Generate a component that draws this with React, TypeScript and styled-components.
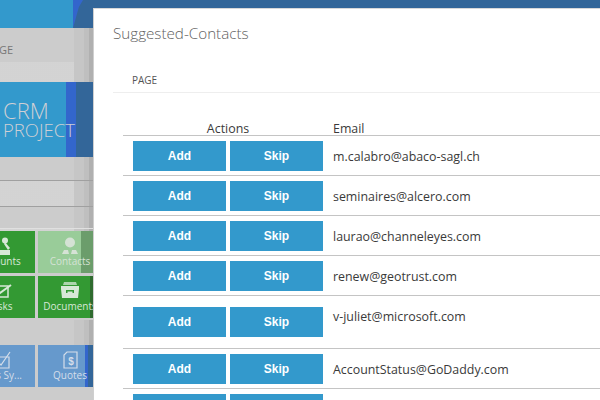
import React from 'react';
import styled, { createGlobalStyle } from 'styled-components';

const GlobalStyle = createGlobalStyle`
  html, body {
    margin: 0;
    padding: 0;
    background: #ffffff;
  }
`;

const Page = styled.div`
  display: flex;
  width: 600px;
  height: 400px;
  overflow: hidden;
  background: #336699;
  font-family: 'Open Sans', sans-serif;
`;

// dimmed app behind the dialog
const Backdrop = styled.div`
  flex: 0 0 93px;
  display: flex;
  flex-direction: column;
  overflow: hidden;
`;

const TopBar = styled.div`
  flex: 0 0 28px;
  display: flex;
  background: #336699;
`;

const TopBlue = styled.div`
  width: 83px;
  background: linear-gradient(to right, #3399cc 73px, #3366cc 73px);
  clip-path: polygon(0 0, 100% 0, 95% 25%, 88% 100%, 0 100%);
`;

const steps = 'linear-gradient(to right, transparent 74px, #c6c6c6 74px 84px, #bfbfbf 84px 89px, #b0b0b0 89px)';

const Band = styled.div<{ $h: number; $dotted?: boolean; $line?: string }>`
  flex: 0 0 ${p => p.$h}px;
  box-sizing: border-box;
  display: flex;
  align-items: center;
  background-color: #cccccc;
  background-image: ${p =>
    p.$dotted ? `${steps}, radial-gradient(#dadada 0.6px, transparent 0.8px)` : steps};
  background-size: 100% 100%, 2px 2px;
  border-top: ${p => (p.$line ? `1px solid ${p.$line}` : '0')};
`;

const CropText = styled.span`
  font-size: 11px;
  color: #777777;
  margin: 8px 0 0 -1px;
`;

const Brand = styled.div`
  flex: 0 0 75px;
  display: flex;
  background: #336699;
`;

const BrandBlue = styled.div`
  box-sizing: content-box;
  width: 63px;
  background: #3399cc;
  border-right: 10px solid #3366cc;
  padding: 16px 0 0 3px;
  color: #cfcfd4;
  font-weight: 300;
  white-space: nowrap;
`;

const BrandBig = styled.div`
  font-size: 22px;
  line-height: 24px;
`;

const BrandSmall = styled.div`
  font-size: 18.5px;
  line-height: 16px;
`;

const TileRow = styled.div<{ $h: number }>`
  flex: 0 0 ${p => p.$h}px;
  display: flex;
  gap: 3px;
  background: #cccccc;
`;

// tile whose left half runs off the window
const CutTile = styled.div<{ $bg: string; $fg: string }>`
  flex: 0 0 71px;
  margin-left: -36px;
  height: 42px;
  background: ${p => p.$bg};
  color: ${p => p.$fg};
  display: flex;
  flex-direction: column;
  align-items: center;
  font-size: 10px;
  line-height: 12px;
  white-space: nowrap;
  svg {
    margin-top: 6px;
    flex: 0 0 18px;
  }
`;

const Tile = styled.div<{ $bg: string; $fg: string }>`
  flex: 0 0 55px;
  box-sizing: border-box;
  height: 42px;
  padding-left: 9px;
  background: ${p => p.$bg};
  color: ${p => p.$fg};
  display: flex;
  flex-direction: column;
  align-items: center;
  font-size: 10px;
  line-height: 12px;
  white-space: nowrap;
  overflow: hidden;
  svg {
    margin-top: 6px;
    flex: 0 0 18px;
  }
`;

const Dialog = styled.div`
  flex: 1;
  margin-top: 8px;
  background: #ffffff;
  border-left: 1px solid #cfcfcf;
  border-top: 1px solid #d8d8d8;
  display: flex;
  flex-direction: column;
  overflow: hidden;
  min-width: 0;
`;

const Title = styled.h1`
  margin: 13px 0 0 19px;
  font-size: 15.2px;
  line-height: 22px;
  font-weight: 300;
  color: #5f5f5f;
`;

const Breadcrumb = styled.div`
  margin: 29px 0 0 19px;
  padding: 0 0 5px 19px;
  border-bottom: 1px solid #eeeeee;
  font-size: 10px;
  line-height: 14px;
  color: #555555;
`;

const Table = styled.div`
  margin: 22px 0 0 29px;
  display: flex;
  flex-direction: column;
`;

const HeadRow = styled.div`
  display: flex;
  height: 14px;
  padding-top: 6px;
  border-bottom: 1px solid #c4c4c4;
  font-size: 12.4px;
  line-height: 16px;
  color: #3a3a3a;
`;

const ActionsHead = styled.div`
  flex: 0 0 200px;
  margin-right: 10px;
  padding-left: 10px;
  box-sizing: border-box;
  text-align: center;
`;

const Row = styled.div<{ $h: number }>`
  display: flex;
  flex: 0 0 ${p => p.$h}px;
  box-sizing: border-box;
  align-items: center;
  padding-left: 10px;
  border-bottom: 1px solid #c4c4c4;
`;

const Actions = styled.div`
  flex: 0 0 190px;
  display: flex;
  gap: 4px;
`;

const ActionButton = styled.button`
  width: 93px;
  height: 30px;
  border: 0;
  padding: 0;
  background: #3399cc;
  color: #ffffff;
  font-family: 'Liberation Sans', sans-serif;
  font-size: 12px;
  font-weight: 700;
`;

const Email = styled.div`
  align-self: flex-start;
  margin: 13px 0 0 10px;
  font-size: 12.4px;
  line-height: 16px;
  color: #3a3a3a;
  white-space: nowrap;
`;

const AccountsIcon = ({ color }: { color: string }) => (
  <svg width="22" height="18" viewBox="0 0 22 18" fill={color}>
    <circle cx="16" cy="3.500" r="3" />
    <path d="M16 5l5 6-2 2-4-6z" />
    <path d="M0 12l5 1h16v5H0z" />
  </svg>
);

const ContactIcon = ({ color }: { color: string }) => (
  <svg width="20" height="18" viewBox="0 0 20 18" fill={color}>
    <circle cx="10" cy="5.500" r="5" />
    <path d="M2 17l2-4h4l1 4zM11 17l1-4h4l2 4z" />
  </svg>
);

const TasksIcon = ({ color }: { color: string }) => (
  <svg width="24" height="18" viewBox="0 0 24 18" fill="none" stroke={color} strokeWidth="1.500">
    <path d="M6 4h14v11H6z" />
    <path d="M9 8l3 3 11-8" strokeWidth="2" />
  </svg>
);

const DocumentsIcon = ({ color }: { color: string }) => (
  <svg width="18" height="18" viewBox="0 0 18 18" fill={color}>
    <path d="M3 0h12l1 3H2z" opacity="0.75" />
    <path d="M0 4h18v3l-1 9H1L0 7zM5 8v3h1.500V9.500h5V11H13V8z" fillRule="evenodd" />
  </svg>
);

const SalesIcon = ({ color }: { color: string }) => (
  <svg width="22" height="18" viewBox="0 0 22 18" fill="none" stroke={color} strokeWidth="1.200">
    <path d="M6 6h14v11H6z" />
    <path d="M9 11l3 3 9-13" />
  </svg>
);

const QuotesIcon = ({ color }: { color: string }) => (
  <svg width="16" height="18" viewBox="0 0 16 18" fill="none" stroke={color} strokeWidth="1.200">
    <path d="M5 1h10v16H2V4z" />
    <text x="9" y="14" fontSize="10" fontWeight="700" fill={color} stroke="none" textAnchor="middle" fontFamily="'Liberation Sans', sans-serif">$</text>
  </svg>
);

const contacts = [
  { email: 'm.calabro@abaco-sagl.ch', h: 40 },
  { email: 'seminaires@alcero.com', h: 40 },
  { email: 'laurao@channeleyes.com', h: 40 },
  { email: 'renew@geotrust.com', h: 40 },
  { email: 'v-juliet@microsoft.com', h: 53 },
  { email: 'AccountStatus@GoDaddy.com', h: 40 },
  { email: '', h: 40 },
];

const green = '#339933';
const blue = '#6699cc';
const greenText = '#d7e8d7';
const blueText = '#d5deea';

const App: React.FC = () => {
  return (
    <>
      <GlobalStyle />
      <Page>
        <Backdrop>
          <TopBar>
            <TopBlue />
          </TopBar>
          <Band $h={34}>
            <CropText>GE</CropText>
          </Band>
          <Band $h={20} $dotted />
          <Brand>
            <BrandBlue>
              <BrandBig>CRM</BrandBig>
              <BrandSmall>PROJECT</BrandSmall>
            </BrandBlue>
          </Brand>
          <Band $h={23} />
          <Band $h={26} $dotted $line="#a0a0a0" />
          <Band $h={22} $line="#a0a0a0" />
          <Band $h={3} $dotted $line="#e0e0e0" />
          <TileRow $h={45}>
            <CutTile $bg={green} $fg={greenText}>
              <AccountsIcon color={greenText} />
              <span>Accounts</span>
            </CutTile>
            <Tile $bg="linear-gradient(to right, #99cc99 43px, #6b9d6b 43px)" $fg="#d5e2d5">
              <ContactIcon color="#d5e2d5" />
              <span>Contacts</span>
            </Tile>
          </TileRow>
          <TileRow $h={44}>
            <CutTile $bg={green} $fg={greenText}>
              <TasksIcon color={greenText} />
              <span>Tasks</span>
            </CutTile>
            <Tile $bg={`linear-gradient(to right, ${green} 52px, #2f6b2f 52px)`} $fg={greenText}>
              <DocumentsIcon color={greenText} />
              <span>Documents</span>
            </Tile>
          </TileRow>
          <Band $h={25} />
          <TileRow $h={55}>
            <CutTile $bg={blue} $fg={blueText}>
              <SalesIcon color={blueText} />
              <span>Sales Sy...</span>
            </CutTile>
            <Tile $bg={`linear-gradient(to right, ${blue} 47px, #3366cc 47px 50px, #336699 50px)`} $fg={blueText}>
              <QuotesIcon color={blueText} />
              <span>Quotes</span>
            </Tile>
          </TileRow>
        </Backdrop>
        <Dialog>
          <Title>Suggested-Contacts</Title>
          <Breadcrumb>PAGE</Breadcrumb>
          <Table>
            <HeadRow>
              <ActionsHead>Actions</ActionsHead>
              <span>Email</span>
            </HeadRow>
            {contacts.map((contact, index) => (
              <Row key={index} $h={contact.h}>
                <Actions>
                  <ActionButton>Add</ActionButton>
                  <ActionButton>Skip</ActionButton>
                </Actions>
                <Email>{contact.email}</Email>
              </Row>
            ))}
          </Table>
        </Dialog>
      </Page>
    </>
  );
};

export default App;
